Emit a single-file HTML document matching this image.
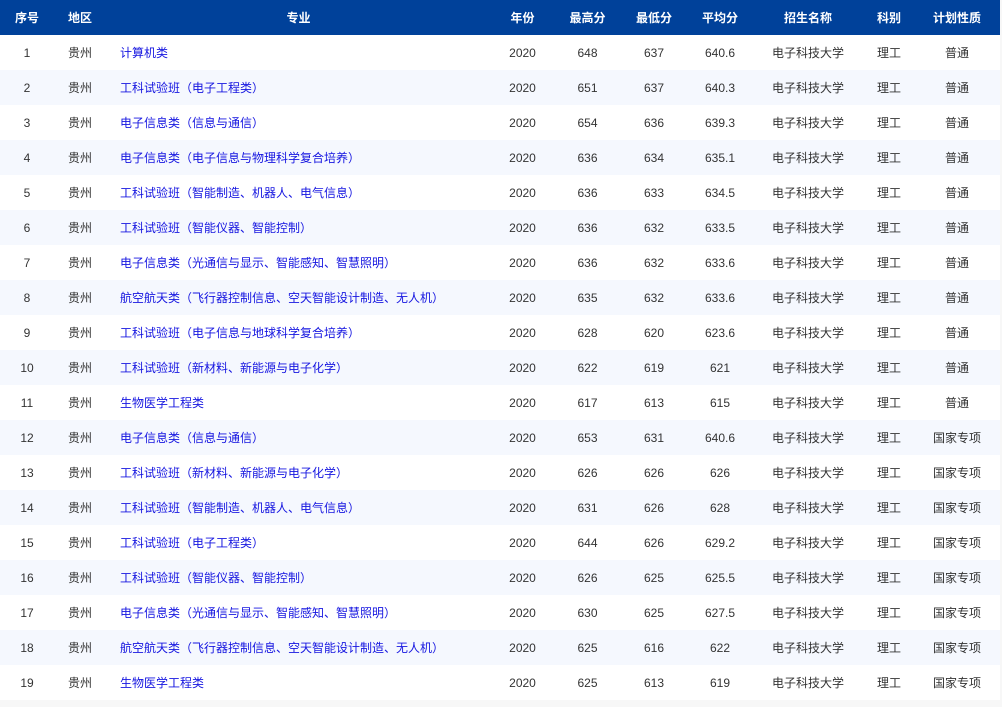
<!DOCTYPE html>
<html><head><meta charset="utf-8"><style>
html,body{margin:0;padding:0;background:#f7f7f7;width:1002px;height:707px;overflow:hidden}
table{border-collapse:collapse;table-layout:fixed;width:1000px;background:#fff;font-family:"Liberation Sans","Noto Sans CJK SC",sans-serif;font-size:12px;color:#333}
th{background:#00419a;color:#fff;font-weight:bold;height:35px;padding:0;text-align:center}
td{height:35px;padding:0;text-align:center;white-space:nowrap}
tr:nth-child(odd) td{background:#f5f8fe}
td.l{text-align:left;padding-left:14px}
td.m{text-align:left;padding-left:13px;color:#1515e0}
</style></head><body>
<table>
<colgroup><col style="width:54px"><col style="width:53px"><col style="width:383px"><col style="width:65px"><col style="width:65px"><col style="width:68px"><col style="width:64px"><col style="width:112px"><col style="width:50px"><col style="width:86px"></colgroup>
<tr><th>序号</th><th style="text-align:left;padding-left:14px">地区</th><th>专业</th><th>年份</th><th>最高分</th><th>最低分</th><th>平均分</th><th>招生名称</th><th>科别</th><th>计划性质</th></tr>
<tr><td>1</td><td class="l">贵州</td><td class="m">计算机类</td><td>2020</td><td>648</td><td>637</td><td>640.6</td><td>电子科技大学</td><td>理工</td><td>普通</td></tr>
<tr><td>2</td><td class="l">贵州</td><td class="m">工科试验班（电子工程类）</td><td>2020</td><td>651</td><td>637</td><td>640.3</td><td>电子科技大学</td><td>理工</td><td>普通</td></tr>
<tr><td>3</td><td class="l">贵州</td><td class="m">电子信息类（信息与通信）</td><td>2020</td><td>654</td><td>636</td><td>639.3</td><td>电子科技大学</td><td>理工</td><td>普通</td></tr>
<tr><td>4</td><td class="l">贵州</td><td class="m">电子信息类（电子信息与物理科学复合培养）</td><td>2020</td><td>636</td><td>634</td><td>635.1</td><td>电子科技大学</td><td>理工</td><td>普通</td></tr>
<tr><td>5</td><td class="l">贵州</td><td class="m">工科试验班（智能制造、机器人、电气信息）</td><td>2020</td><td>636</td><td>633</td><td>634.5</td><td>电子科技大学</td><td>理工</td><td>普通</td></tr>
<tr><td>6</td><td class="l">贵州</td><td class="m">工科试验班（智能仪器、智能控制）</td><td>2020</td><td>636</td><td>632</td><td>633.5</td><td>电子科技大学</td><td>理工</td><td>普通</td></tr>
<tr><td>7</td><td class="l">贵州</td><td class="m">电子信息类（光通信与显示、智能感知、智慧照明）</td><td>2020</td><td>636</td><td>632</td><td>633.6</td><td>电子科技大学</td><td>理工</td><td>普通</td></tr>
<tr><td>8</td><td class="l">贵州</td><td class="m">航空航天类（飞行器控制信息、空天智能设计制造、无人机）</td><td>2020</td><td>635</td><td>632</td><td>633.6</td><td>电子科技大学</td><td>理工</td><td>普通</td></tr>
<tr><td>9</td><td class="l">贵州</td><td class="m">工科试验班（电子信息与地球科学复合培养）</td><td>2020</td><td>628</td><td>620</td><td>623.6</td><td>电子科技大学</td><td>理工</td><td>普通</td></tr>
<tr><td>10</td><td class="l">贵州</td><td class="m">工科试验班（新材料、新能源与电子化学）</td><td>2020</td><td>622</td><td>619</td><td>621</td><td>电子科技大学</td><td>理工</td><td>普通</td></tr>
<tr><td>11</td><td class="l">贵州</td><td class="m">生物医学工程类</td><td>2020</td><td>617</td><td>613</td><td>615</td><td>电子科技大学</td><td>理工</td><td>普通</td></tr>
<tr><td>12</td><td class="l">贵州</td><td class="m">电子信息类（信息与通信）</td><td>2020</td><td>653</td><td>631</td><td>640.6</td><td>电子科技大学</td><td>理工</td><td>国家专项</td></tr>
<tr><td>13</td><td class="l">贵州</td><td class="m">工科试验班（新材料、新能源与电子化学）</td><td>2020</td><td>626</td><td>626</td><td>626</td><td>电子科技大学</td><td>理工</td><td>国家专项</td></tr>
<tr><td>14</td><td class="l">贵州</td><td class="m">工科试验班（智能制造、机器人、电气信息）</td><td>2020</td><td>631</td><td>626</td><td>628</td><td>电子科技大学</td><td>理工</td><td>国家专项</td></tr>
<tr><td>15</td><td class="l">贵州</td><td class="m">工科试验班（电子工程类）</td><td>2020</td><td>644</td><td>626</td><td>629.2</td><td>电子科技大学</td><td>理工</td><td>国家专项</td></tr>
<tr><td>16</td><td class="l">贵州</td><td class="m">工科试验班（智能仪器、智能控制）</td><td>2020</td><td>626</td><td>625</td><td>625.5</td><td>电子科技大学</td><td>理工</td><td>国家专项</td></tr>
<tr><td>17</td><td class="l">贵州</td><td class="m">电子信息类（光通信与显示、智能感知、智慧照明）</td><td>2020</td><td>630</td><td>625</td><td>627.5</td><td>电子科技大学</td><td>理工</td><td>国家专项</td></tr>
<tr><td>18</td><td class="l">贵州</td><td class="m">航空航天类（飞行器控制信息、空天智能设计制造、无人机）</td><td>2020</td><td>625</td><td>616</td><td>622</td><td>电子科技大学</td><td>理工</td><td>国家专项</td></tr>
<tr><td>19</td><td class="l">贵州</td><td class="m">生物医学工程类</td><td>2020</td><td>625</td><td>613</td><td>619</td><td>电子科技大学</td><td>理工</td><td>国家专项</td></tr>
</table>
</body></html>
